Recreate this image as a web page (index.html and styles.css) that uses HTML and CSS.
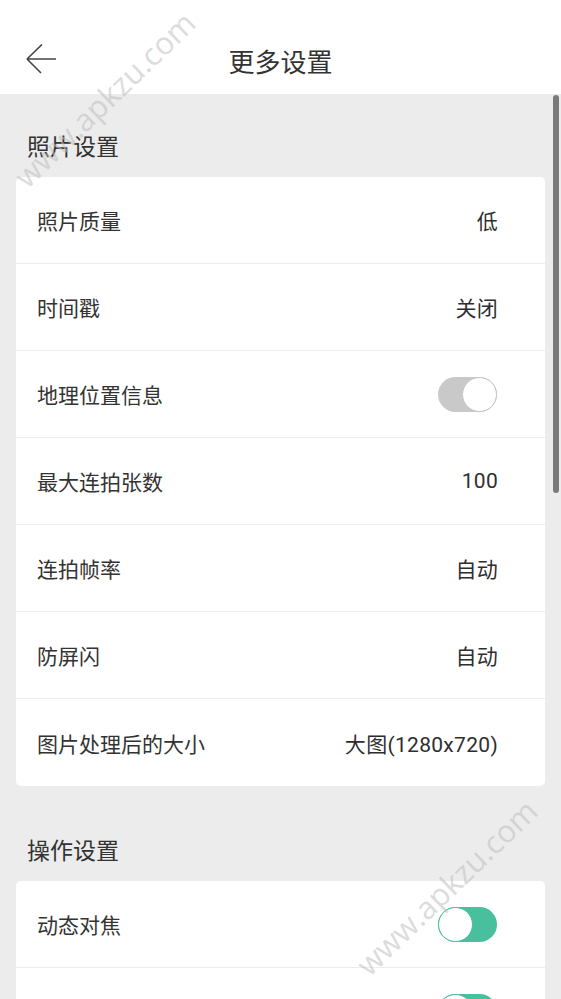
FILE: index.html
```html
<!DOCTYPE html>
<html lang="zh-CN">
<head>
  <meta charset="UTF-8" />
  <meta name="viewport" content="width=device-width, initial-scale=1.0" />
  <title>更多设置</title>
  <link rel="stylesheet" href="styles.css">
</head>
<body>
  <div class="header">
    <svg class="back" width="32" height="32" viewBox="0 0 32 32">
      <path d="M1 15 L16 0.5 M1 15 L30 15 M1 15 L15 29" fill="none" stroke="#444" stroke-width="1.6" />
    </svg>
    <div class="title">更多设置</div>
  </div>

  <div class="content">
    <div class="section-title">照片设置</div>
    <div class="card">
      <div class="row"><span class="label">照片质量</span><span class="value">低</span></div>
      <div class="row"><span class="label">时间戳</span><span class="value">关闭</span></div>
      <div class="row"><span class="label">地理位置信息</span><span class="switch"></span></div>
      <div class="row"><span class="label">最大连拍张数</span><span class="value">100</span></div>
      <div class="row"><span class="label">连拍帧率</span><span class="value">自动</span></div>
      <div class="row"><span class="label">防屏闪</span><span class="value">自动</span></div>
      <div class="row"><span class="label">图片处理后的大小</span><span class="value">大图(1280x720)</span></div>
    </div>

    <div class="section-title">操作设置</div>
    <div class="card">
      <div class="row"><span class="label">动态对焦</span><span class="switch on"></span></div>
      <div class="row"><span class="label"></span><span class="switch on"></span></div>
    </div>

    <div class="scrollbar"></div>
  </div>

  <div class="watermark wm-top">www.apkzu.com</div>
  <div class="watermark wm-bottom">www.apkzu.com</div>
</body>
</html>
```

FILE: styles.css
```css
body {
  margin: 0;
  font-family: Roboto, "Noto Sans CJK SC", sans-serif;
  color: #333;
  background-color: #ececec;
  overflow: hidden;
  height: 999px;
  position: relative;
}
.header {
  height: 94px;
  background: white;
  position: relative;
  display: flex;
  align-items: center;
  justify-content: center;
}
.back {
  position: absolute;
  left: 26px;
  top: 44px;
}
.title {
  font-size: 26px;
  margin-top: 26px;
  color: #333;
}
.content {
  position: relative;
}
.section-title {
  font-size: 23px;
  line-height: 31px;
  padding: 38px 27px 14px;
  color: #333;
}
.card {
  background: white;
  margin: 0 16px 12px;
  border-radius: 5px;
}
.row {
  height: 87px;
  box-sizing: border-box;
  display: flex;
  align-items: center;
  justify-content: space-between;
  padding: 0 47px 0 21px;
  border-bottom: 1px solid #ededed;
  font-size: 21px;
}
.row:last-child {
  border-bottom: none;
}
.label {
  color: #333;
}
.value {
  color: #2e2e2e;
  letter-spacing: 0.3px;
}
.switch {
  width: 59px;
  height: 35px;
  border-radius: 18px;
  background: #c9c9c9;
  position: relative;
  margin-right: 1px;
}
.switch::after {
  content: "";
  position: absolute;
  right: 0;
  top: 0;
  width: 33px;
  height: 33px;
  border-radius: 50%;
  background: white;
  border: 1px solid #c4c4c4;
}
.switch.on {
  background: #48bf9d;
}
.switch.on::after {
  left: 0;
  right: auto;
  border-color: #48bf9d;
}
.scrollbar {
  position: absolute;
  right: 2px;
  top: 1px;
  width: 6px;
  height: 398px;
  border-radius: 3px;
  background: #7a7a7a;
}
.watermark {
  position: absolute;
  font-family: "Open Sans", sans-serif;
  font-size: 31px;
  color: rgba(190, 190, 190, 0.55);
  transform: rotate(-44deg);
  white-space: nowrap;
  pointer-events: none;
}
.wm-top {
  left: -14px;
  top: 78px;
}
.wm-bottom {
  left: 328px;
  top: 866px;
}
```
